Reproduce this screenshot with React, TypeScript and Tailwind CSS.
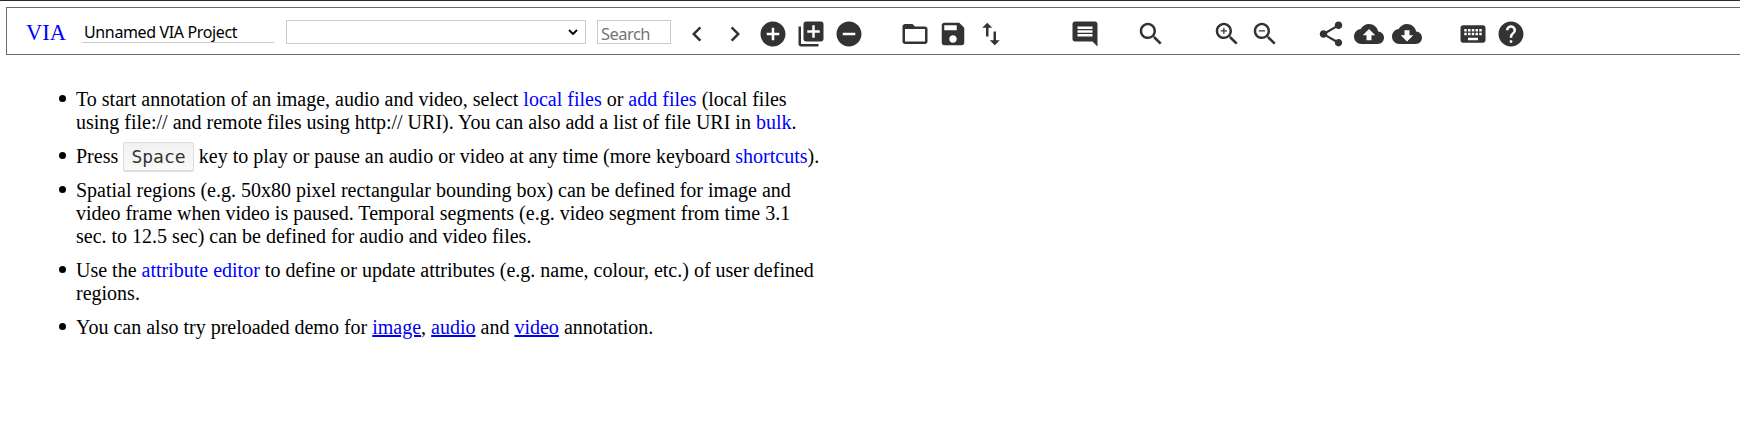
import type { ReactNode } from "react";

const icons: Record<string, string> = {
  prev: "M15.41 7.41 14 6l-6 6 6 6 1.41-1.41L10.83 12z",
  next: "M10 6 8.59 7.41 13.17 12l-4.58 4.59L10 18l6-6z",
  add: "M12 2C6.48 2 2 6.48 2 12s4.48 10 10 10 10-4.48 10-10S17.52 2 12 2zm5 11h-4v4h-2v-4H7v-2h4V7h2v4h4v2z",
  addBulk:
    "M4 6H2v14c0 1.1.9 2 2 2h14v-2H4V6zm16-4H8c-1.1 0-2 .9-2 2v12c0 1.1.9 2 2 2h12c1.1 0 2-.9 2-2V4c0-1.1-.9-2-2-2zm-1 9h-4v4h-2v-4H9V9h4V5h2v4h4v2z",
  remove: "M12 2C6.48 2 2 6.48 2 12s4.48 10 10 10 10-4.48 10-10S17.52 2 12 2zm5 11H7v-2h10v2z",
  open: "M20 6h-8l-2-2H4c-1.1 0-1.99.9-1.99 2L2 18c0 1.1.9 2 2 2h16c1.1 0 2-.9 2-2V8c0-1.1-.9-2-2-2zm0 12H4V8h16v10z",
  save: "M17 3H5c-1.11 0-2 .9-2 2v14c0 1.1.89 2 2 2h14c1.1 0 2-.9 2-2V7l-4-4zm-5 16c-1.66 0-3-1.34-3-3s1.34-3 3-3 3 1.34 3 3-1.34 3-3 3zm3-10H5V5h10v4z",
  transfer: "M16 17.01V10h-2v7.01h-3L15 21l4-3.99h-3zM9 3 5 6.99h3V14h2V6.99h3L9 3z",
  editor:
    "M21.99 4c0-1.1-.89-2-1.99-2H4c-1.1 0-2 .9-2 2v12c0 1.1.9 2 2 2h14l4 4-.01-18zM18 14H6v-2h12v2zm0-3H6V9h12v2zm0-3H6V6h12v2z",
  search:
    "M15.5 14h-.79l-.28-.27C15.41 12.59 16 11.11 16 9.5 16 5.91 13.09 3 9.5 3S3 5.91 3 9.5 5.91 16 9.5 16c1.61 0 3.09-.59 4.23-1.57l.27.28v.79l5 4.99L20.49 19l-4.99-5zm-6 0C7.01 14 5 11.99 5 9.5S7.01 5 9.5 5 14 7.01 14 9.5 11.99 14 9.5 14z",
  zoomIn:
    "M15.5 14h-.79l-.28-.27C15.41 12.59 16 11.11 16 9.5 16 5.91 13.09 3 9.5 3S3 5.91 3 9.5 5.91 16 9.5 16c1.61 0 3.09-.59 4.23-1.57l.27.28v.79l5 4.99L20.49 19l-4.99-5zm-6 0C7.01 14 5 11.99 5 9.5S7.01 5 9.5 5 14 7.01 14 9.5 11.99 14 9.5 14zm2.5-4h-2v2H9v-2H7V9h2V7h1v2h2v1z",
  zoomOut:
    "M15.5 14h-.79l-.28-.27C15.41 12.59 16 11.11 16 9.5 16 5.91 13.09 3 9.5 3S3 5.91 3 9.5 5.91 16 9.5 16c1.61 0 3.09-.59 4.23-1.57l.27.28v.79l5 4.99L20.49 19l-4.99-5zm-6 0C7.01 14 5 11.99 5 9.5S7.01 5 9.5 5 14 7.01 14 9.5 11.99 14 9.5 14zM7 9h5v1H7z",
  share:
    "M18 16.08c-.76 0-1.44.3-1.96.77L8.91 12.7c.05-.23.09-.46.09-.7s-.04-.47-.09-.7l7.05-4.11c.54.5 1.25.81 2.04.81 1.66 0 3-1.34 3-3s-1.34-3-3-3-3 1.34-3 3c0 .24.04.47.09.7L8.04 9.81C7.5 9.31 6.79 9 6 9c-1.66 0-3 1.34-3 3s1.34 3 3 3c.79 0 1.5-.31 2.04-.81l7.12 4.16c-.05.21-.08.43-.08.65 0 1.61 1.31 2.92 2.92 2.92s2.92-1.31 2.92-2.92-1.31-2.92-2.92-2.92z",
  upload:
    "M19.35 10.04C18.67 6.59 15.64 4 12 4 9.11 4 6.6 5.64 5.35 8.04 2.34 8.36 0 10.91 0 14c0 3.31 2.69 6 6 6h13c2.76 0 5-2.24 5-5 0-2.64-2.05-4.78-4.65-4.96zM14 13v4h-4v-4H7l5-5 5 5h-3z",
  download:
    "M19.35 10.04C18.67 6.59 15.64 4 12 4 9.11 4 6.6 5.64 5.35 8.04 2.34 8.36 0 10.91 0 14c0 3.31 2.69 6 6 6h13c2.76 0 5-2.24 5-5 0-2.64-2.05-4.78-4.65-4.96zM17 13l-5 5-5-5h3V9h4v4h3z",
  keyboard:
    "M20 5H4c-1.1 0-1.99.9-1.99 2L2 17c0 1.1.9 2 2 2h16c1.1 0 2-.9 2-2V7c0-1.1-.9-2-2-2zm-9 3h2v2h-2V8zm0 3h2v2h-2v-2zM8 8h2v2H8V8zm0 3h2v2H8v-2zm-1 2H5v-2h2v2zm0-3H5V8h2v2zm9 7H8v-2h8v2zm0-4h-2v-2h2v2zm0-3h-2V8h2v2zm3 3h-2v-2h2v2zm0-3h-2V8h2v2z",
  help: "M12 2C6.48 2 2 6.48 2 12s4.48 10 10 10 10-4.48 10-10S17.52 2 12 2zm1 17h-2v-2h2v2zm2.07-7.75-.9.92C13.45 12.9 13 13.5 13 15h-2v-.5c0-1.1.45-2.1 1.17-2.83l1.24-1.26c.37-.36.59-.86.59-1.41 0-1.1-.9-2-2-2s-2 .9-2 2H8c0-2.21 1.79-4 4-4s4 1.79 4 4c0 .88-.36 1.68-.93 2.25z",
};

function Group({ names, className = "" }: { names: string[]; className?: string }) {
  return (
    <div className={`flex shrink-0 gap-2 ${className}`}>
      {names.map((name) => (
        <button key={name} type="button" aria-label={name} className="size-[30px]">
          <svg viewBox="0 0 24 24" className="block size-[30px] fill-[#333333]">
            <path d={icons[name]} />
          </svg>
        </button>
      ))}
    </div>
  );
}

function Action({ children }: { children: ReactNode }) {
  return <span className="cursor-pointer text-[#0000ff]">{children}</span>;
}

function DemoLink({ children }: { children: ReactNode }) {
  return (
    <a href="#" className="text-[#0000ee] underline">
      {children}
    </a>
  );
}

function Item({ children }: { children: ReactNode }) {
  return (
    <li className="relative before:absolute before:top-[7px] before:-left-[17px] before:size-[7px] before:rounded-full before:bg-black">
      {children}
    </li>
  );
}

export default function App() {
  return (
    <div className="h-[429px] overflow-hidden border-t border-[#2b2a33] bg-white pt-1.5 pl-1.5 font-['Liberation_Serif',serif] text-xl leading-[23px] text-black">
      <header className="flex h-12 items-start border border-r-0 border-[#6a6a6a] pl-[19px]">
        <span className="mt-[11px] w-[56px] shrink-0 text-[22.5px] leading-[28px] text-[#0000ff]">VIA</span>
        <input
          defaultValue="Unnamed VIA Project"
          className="mt-[11px] h-6 w-48 shrink-0 border-b border-[#cccccc] pt-0.5 pl-0.5 font-['Noto_Sans',sans-serif] text-base leading-5 tracking-[-0.36px] outline-none"
        />
        <div className="mt-3 ml-3 flex h-6 w-[300px] shrink-0 items-center justify-end border border-[#cccccc] pr-[7px]">
          <svg viewBox="0 0 10 7" className="h-[7px] w-[10px] fill-none stroke-black stroke-[1.8]">
            <path d="M1 1l4 4 4-4" />
          </svg>
        </div>
        <input
          placeholder="Search"
          className="mt-3 ml-[11px] h-6 w-[74px] shrink-0 border border-[#cccccc] px-[3px] pt-0.5 font-['Noto_Sans',sans-serif] text-[16.5px] leading-5 tracking-[-0.55px] outline-none placeholder:text-[#757575]"
        />
        <div className="mt-[11px] ml-[11px] flex">
          <Group names={["prev", "next", "add", "addBulk", "remove"]} />
          <Group names={["open", "save", "transfer"]} className="ml-9" />
          <Group names={["editor"]} className="ml-16" />
          <Group names={["search"]} className="ml-9" />
          <Group names={["zoomIn", "zoomOut"]} className="ml-[46px]" />
          <Group names={["share", "upload", "download"]} className="ml-9" />
          <Group names={["keyboard", "help"]} className="ml-9" />
        </div>
      </header>
      <ul className="mt-[33px] ml-[70px] flex w-[746px] flex-col gap-[11px]">
        <Item>
          To start annotation of an image, audio and video, select <Action>local files</Action> or{" "}
          <Action>add files</Action> (local files using file:// and remote files using http:// URI). You can also add a
          list of file URI in <Action>bulk</Action>.
        </Item>
        <Item>
          Press{" "}
          <kbd className="rounded-[3px] border border-b-2 border-[#dddddd] bg-linear-to-b from-[#f1f1f1] to-[#fafafa] px-[7.2px] py-[3px] font-['DejaVu_Sans_Mono',monospace] text-[18px] leading-[23px] text-[#333333]">
            Space
          </kbd>{" "}
          key to play or pause an audio or video at any time (more keyboard <Action>shortcuts</Action>).
        </Item>
        <Item>
          Spatial regions (e.g. 50x80 pixel rectangular bounding box) can be defined for image and video frame when
          video is paused. Temporal segments (e.g. video segment from time 3.1 sec. to 12.5 sec) can be defined for
          audio and video files.
        </Item>
        <Item>
          Use the <Action>attribute editor</Action> to define or update attributes (e.g. name, colour, etc.) of user
          defined regions.
        </Item>
        <Item>
          You can also try preloaded demo for <DemoLink>image</DemoLink>, <DemoLink>audio</DemoLink> and{" "}
          <DemoLink>video</DemoLink> annotation.
        </Item>
      </ul>
    </div>
  );
}
